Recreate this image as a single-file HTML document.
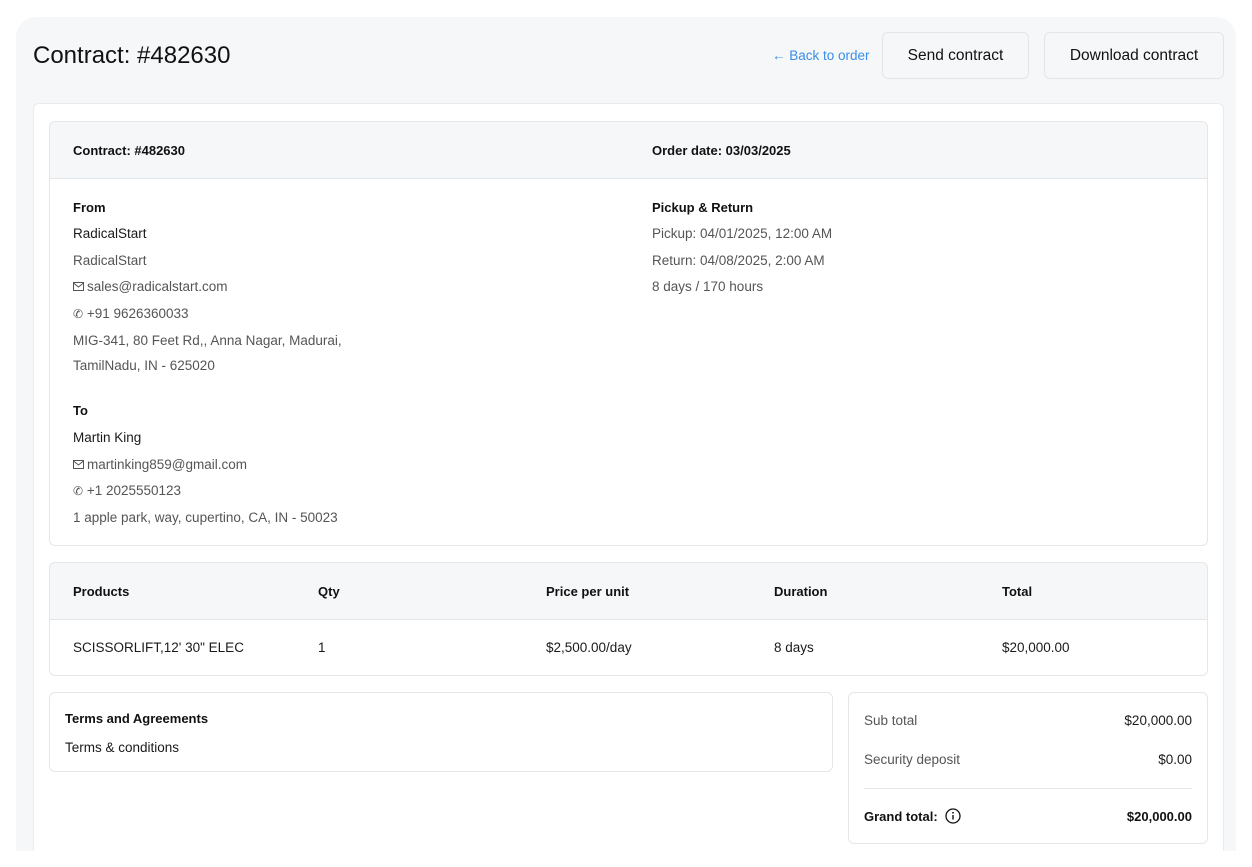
<!DOCTYPE html>
<html><head><meta charset="utf-8"><style>
*{box-sizing:border-box;margin:0;padding:0}
body{width:1252px;height:867px;background:#fff;font-family:"Liberation Sans",sans-serif;color:#1a1a1a;overflow:hidden;position:relative;font-size:13.5px}
.outer{position:absolute;left:16px;top:17px;width:1220px;height:834px;background:#f5f7f8;border-radius:20px 20px 0 0}
.title{position:absolute;left:33px;top:42px;font-size:24px;color:#111}
.back{position:absolute;left:772px;top:48px;color:#3a8ee6;font-size:13.5px}
.btn{position:absolute;top:32px;height:47px;border:1px solid #e2e6ea;border-radius:6px;background:#f5f7f8;font-size:15.5px;display:flex;align-items:center;justify-content:center;color:#111}
.inner{position:absolute;left:33px;top:103px;width:1191px;height:748px;background:#fff;border:1px solid #e8ecef;border-bottom:none;border-radius:6px 6px 0 0}
.card{position:absolute;border:1px solid #e3e7ea;border-radius:6px;background:#fff;overflow:hidden}
.hd{background:#f5f7f8;border-bottom:1px solid #e3e7ea;height:57px;position:relative}
.b{font-weight:bold;font-size:13px;color:#111}
.abs{position:absolute}
.g{color:#555}
.ic{display:inline-block;vertical-align:-1px;margin-right:3px}
</style></head><body>
<div class="outer"></div>
<div class="title">Contract: #482630</div>
<div class="back">← Back to order</div>
<div class="btn" style="left:882px;width:147px">Send contract</div>
<div class="btn" style="left:1044px;width:180px">Download contract</div>
<div class="inner"></div>

<div class="card" style="left:49px;top:121px;width:1159px;height:425px">
 <div class="hd"><span class="abs b" style="left:23px;top:21px">Contract: #482630</span><span class="abs b" style="left:602px;top:21px">Order date: 03/03/2025</span></div>
 <div class="abs b" style="left:23px;top:78px">From</div>
 <div class="abs" style="left:23px;top:104px">RadicalStart</div>
 <div class="abs g" style="left:23px;top:131px">RadicalStart</div>
 <div class="abs g" style="left:23px;top:157px"><svg class="ic" width="11" height="10" viewBox="0 0 11 10"><rect x=".5" y=".5" width="10" height="8" fill="none" stroke="#555"/><path d="M.5 1l5 4 5-4" fill="none" stroke="#555"/></svg>sales@radicalstart.com</div>
 <div class="abs g" style="left:23px;top:184px"><span style="font-size:12px">✆</span> +91 9626360033</div>
 <div class="abs g" style="left:23px;top:206px;line-height:25px">MIG-341, 80 Feet Rd,, Anna Nagar, Madurai,<br>TamilNadu, IN - 625020</div>
 <div class="abs b" style="left:23px;top:281px">To</div>
 <div class="abs" style="left:23px;top:308px">Martin King</div>
 <div class="abs g" style="left:23px;top:335px"><svg class="ic" width="11" height="10" viewBox="0 0 11 10"><rect x=".5" y=".5" width="10" height="8" fill="none" stroke="#555"/><path d="M.5 1l5 4 5-4" fill="none" stroke="#555"/></svg>martinking859@gmail.com</div>
 <div class="abs g" style="left:23px;top:361px"><span style="font-size:12px">✆</span> +1 2025550123</div>
 <div class="abs g" style="left:23px;top:388px">1 apple park, way, cupertino, CA, IN - 50023</div>
 <div class="abs b" style="left:602px;top:78px">Pickup &amp; Return</div>
 <div class="abs g" style="left:602px;top:104px">Pickup: 04/01/2025, 12:00 AM</div>
 <div class="abs g" style="left:602px;top:131px">Return: 04/08/2025, 2:00 AM</div>
 <div class="abs g" style="left:602px;top:157px">8 days / 170 hours</div>
</div>

<div class="card" style="left:49px;top:562px;width:1159px;height:114px">
 <div class="hd"><span class="abs b" style="left:23px;top:21px">Products</span><span class="abs b" style="left:268px;top:21px">Qty</span><span class="abs b" style="left:496px;top:21px">Price per unit</span><span class="abs b" style="left:724px;top:21px">Duration</span><span class="abs b" style="left:952px;top:21px">Total</span></div>
 <span class="abs" style="left:23px;top:77px">SCISSORLIFT,12' 30" ELEC</span><span class="abs" style="left:268px;top:77px">1</span><span class="abs" style="left:496px;top:77px">$2,500.00/day</span><span class="abs" style="left:724px;top:77px">8 days</span><span class="abs" style="left:952px;top:77px">$20,000.00</span>
</div>

<div class="card" style="left:49px;top:692px;width:784px;height:80px">
 <div class="abs b" style="left:15px;top:18px">Terms and Agreements</div>
 <div class="abs" style="left:15px;top:47px">Terms &amp; conditions</div>
</div>

<div class="card" style="left:848px;top:692px;width:360px;height:152px">
 <div class="abs g" style="left:15px;top:20px">Sub total</div><div class="abs" style="right:15px;top:20px">$20,000.00</div>
 <div class="abs g" style="left:15px;top:59px">Security deposit</div><div class="abs" style="right:15px;top:59px">$0.00</div>
 <div class="abs" style="left:15px;right:15px;top:95px;border-top:1px solid #e3e7ea"></div>
 <div class="abs b" style="left:15px;top:116px">Grand total:</div>
 <svg class="abs" style="left:96px;top:115px" width="16" height="16" viewBox="0 0 16 16"><circle cx="8" cy="8" r="7" fill="none" stroke="#111" stroke-width="1.3"/><path d="M8 7v4.5" stroke="#111" stroke-width="1.4"/><circle cx="8" cy="4.8" r=".9" fill="#111"/></svg>
 <div class="abs b" style="right:15px;top:116px">$20,000.00</div>
</div>
</body></html>
